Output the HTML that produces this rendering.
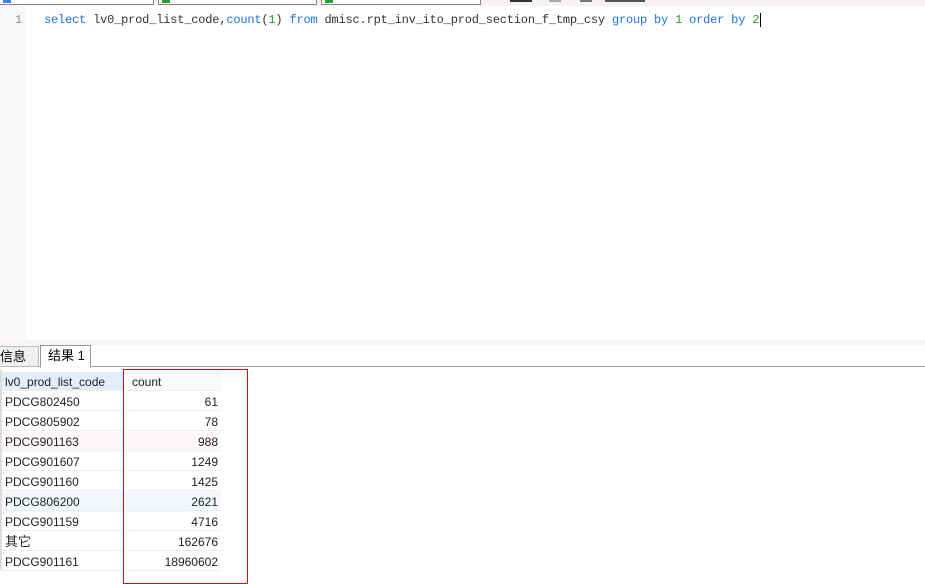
<!DOCTYPE html>
<html><head><meta charset="utf-8"><style>
*{margin:0;padding:0;box-sizing:border-box}
body{width:925px;height:579px;overflow:hidden;background:#fff;position:relative;font-family:"Liberation Sans","Noto Sans CJK SC",sans-serif}
.top{position:absolute;left:0;top:0;width:925px;height:6px;background:#f5f1f4}
.tb{position:absolute;top:0;height:5px;background:#fff;border:1px solid #888;border-top:none}
.gut{position:absolute;left:0;top:6px;width:27px;height:334px;background:#faf8fa}
.code{position:absolute;left:44px;top:13px;font-family:"Liberation Mono",monospace;font-size:12px;color:#333;white-space:pre;letter-spacing:-0.19px}
.ln{position:absolute;left:15px;top:13px;font-family:"Liberation Mono",monospace;font-size:12px;color:#888}
.k{color:#1a73e8}.n{color:#2a9d2a}
.sep{position:absolute;left:0;top:340px;width:925px;height:5px;background:#f7f3f6}
.tabs{position:absolute;left:0;top:345px;width:925px;height:22px;border-bottom:1px solid #a0a0a0}
.tab{position:absolute;top:0;height:22px;font-size:13px;line-height:20px}
.row{position:absolute;left:2px;height:20px;font-size:12px;line-height:20px}
.c1{position:absolute;left:0;width:121px;height:19px;padding-left:3px;border-bottom:1px solid #eee;color:#222}
.c2{position:absolute;left:126px;width:93px;height:19px;padding-right:3px;text-align:right;border-bottom:1px solid #eee;color:#222}
</style></head><body>
<div class="top"></div>
<div class="tb" style="left:-1px;width:155px"><div style="position:absolute;left:3px;top:0;width:8px;height:3px;background:#3b7de0"></div></div>
<div class="tb" style="left:158px;width:159px"><div style="position:absolute;left:3px;top:0;width:8px;height:3px;background:#2a9d2a"></div></div>
<div class="tb" style="left:321px;width:160px"><div style="position:absolute;left:3px;top:0;width:8px;height:3px;background:#2a9d2a"></div></div>
<div style="position:absolute;left:510px;top:0;width:22px;height:2px;background:#333"></div>
<div style="position:absolute;left:549px;top:0;width:12px;height:2px;background:#aaa"></div>
<div style="position:absolute;left:580px;top:0;width:12px;height:2px;background:#777"></div>
<div style="position:absolute;left:605px;top:0;width:40px;height:2px;background:#555"></div>
<div class="gut"></div>
<div class="ln">1</div>
<div class="code"><span class="k">select</span> lv0_prod_list_code,<span class="k">count</span>(<span class="n">1</span>) <span class="k">from</span> dmisc.rpt_inv_ito_prod_section_f_tmp_csy <span class="k">group by</span> <span class="n">1</span> <span class="k">order by</span> <span class="n">2</span><span style="border-left:1px solid #000;margin-left:1px"></span></div>
<div class="sep"></div>
<div class="tabs">
 <div class="tab" style="left:-2px;width:41px;background:#f0f0f0;border:1px solid #bbb;top:1px;height:21px;padding-left:1px">信息</div>
 <div class="tab" style="left:40px;width:51px;background:#fff;border:1px solid #999;border-bottom:1px solid #fff;height:23px;padding-left:7px">结果 1</div>
</div>
<div style="position:absolute;left:0;top:370px;width:2px;height:200px;background:#ddd"></div>
<div class="row" style="top:372px;width:219px">
 <div class="c1" style="background:#e2eefb">lv0_prod_list_code</div>
 <div class="c2" style="text-align:left;padding-left:4px;background:#fafafa">count</div>
</div>
<div class="row" style="top:392px;width:219px"><div class="c1">PDCG802450</div><div class="c2">61</div></div>
<div class="row" style="top:412px;width:219px"><div class="c1">PDCG805902</div><div class="c2">78</div></div>
<div class="row" style="top:432px;width:219px;background:#fcf8fa"><div class="c1">PDCG901163</div><div class="c2">988</div></div>
<div class="row" style="top:452px;width:219px"><div class="c1">PDCG901607</div><div class="c2">1249</div></div>
<div class="row" style="top:472px;width:219px"><div class="c1">PDCG901160</div><div class="c2">1425</div></div>
<div class="row" style="top:492px;width:219px;background:#f3f7fc"><div class="c1">PDCG806200</div><div class="c2">2621</div></div>
<div class="row" style="top:512px;width:219px"><div class="c1">PDCG901159</div><div class="c2">4716</div></div>
<div class="row" style="top:532px;width:219px"><div class="c1" style="font-size:13px">其它</div><div class="c2">162676</div></div>
<div class="row" style="top:552px;width:219px"><div class="c1">PDCG901161</div><div class="c2">18960602</div></div>
<div style="position:absolute;left:123px;top:369px;width:125px;height:215px;border:1px solid #d01010"></div>
</body></html>
